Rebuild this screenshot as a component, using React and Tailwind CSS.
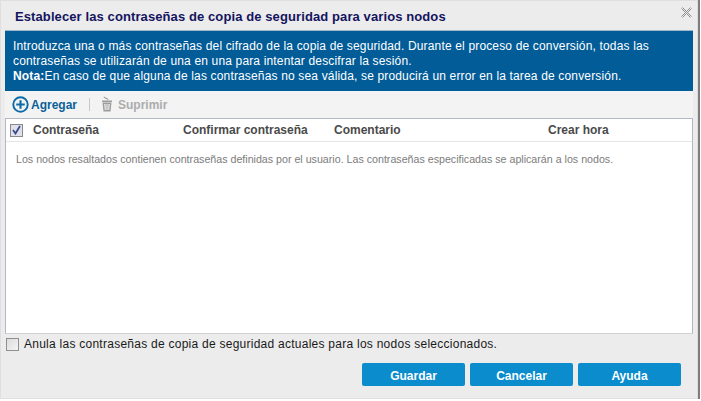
import React from 'react';

const App = () => {
  return (
    <div className="w-[701px] h-[401px] bg-white overflow-hidden font-['Liberation_Sans',Arial,sans-serif]">
      <div className="w-[700px] h-[399px] border-r-2 border-[#7d7d7d]">
        <div className="h-full bg-[#ececec] border border-[#dfdfdf] flex flex-col">
          {/* Title */}
          <div className="h-[29px] flex items-center justify-between pl-[14px] pr-[4px] shrink-0">
            <h1 className="text-[13px] font-bold text-[#14145f] tracking-[0.1px] mt-[2px]">
              Establecer las contraseñas de copia de seguridad para varios nodos
            </h1>
            <svg width="11" height="11" viewBox="0 0 11 11" className="mb-[7px] mr-[1px]" fill="none" stroke="#8f8f8f" strokeWidth="1">
              <path d="M0.5 1.5 L9.5 10.5 M1.5 0.5 L10.5 9.5 M10.5 1.5 L1.5 10.5 M9.5 0.5 L0.5 9.5" />
            </svg>
          </div>

          {/* Info banner */}
          <div className="mx-[4px] h-[61px] bg-[#025c98] border-t border-[#9fb6c9] text-white text-[12px] leading-[15px] pl-[8px] pt-[8px] tracking-[0.16px] shrink-0">
            <p>Introduzca una o más contraseñas del cifrado de la copia de seguridad. Durante el proceso de conversión, todas las</p>
            <p>contraseñas se utilizarán de una en una para intentar descifrar la sesión.</p>
            <p><b>Nota:</b>En caso de que alguna de las contraseñas no sea válida, se producirá un error en la tarea de conversión.</p>
          </div>

          {/* Toolbar */}
          <div className="mx-[4px] h-[27px] bg-[#f3f3f3] flex items-center pl-[7px] shrink-0">
            <svg width="17" height="17" viewBox="0 0 16 16" fill="none" stroke="#0b6aa8" strokeWidth="1.8">
              <circle cx="8" cy="8" r="6.8" />
              <path d="M8 4 V12 M4 8 H12" strokeWidth="2" />
            </svg>
            <span className="ml-[2px] text-[12px] font-bold text-[#0b5f98]">Agregar</span>
            <span className="ml-[12px] w-px h-[13px] bg-[#c8c8c8]" />
            <svg width="12" height="16" viewBox="0 0 12 16" className="ml-[11px] mb-[1px]" fill="#9c9c9c">
              <path d="M3 0.5 L7.5 3 L7 4 L2.5 1.5 Z" />
              <path d="M1 4.5 H11 V6 H1 Z" />
              <path d="M1.5 6.5 H10.5 L9.5 15.5 H2.5 Z M3.2 8 L3.8 14 H4.8 L4.5 8 Z M5.5 8 V14 H6.5 V8 Z M7.5 8 L7.2 14 H8.2 L8.8 8 Z" fillRule="evenodd" />
            </svg>
            <span className="ml-[5px] text-[12px] font-bold text-[#acacac]">Suprimir</span>
          </div>

          {/* Table */}
          <div className="mx-[4px] h-[216px] bg-white border border-[#b4b8c6] border-b-[#d2d2d6] shrink-0 flex flex-col">
            <div className="h-[23px] border-b border-[#e6e6e6] flex items-center text-[12px] font-bold text-[#4a4a4a]">
              <span className="w-[27px] pl-[4px]">
                <span className="w-[13px] h-[13px] border border-[#8a8a8a] bg-[#dfe0ea] flex items-center justify-center">
                  <svg width="9" height="10" viewBox="0 0 9 10" fill="none" stroke="#3b4a8c" strokeWidth="1.8">
                    <path d="M1 5 L3.5 8.5 L8 1" />
                  </svg>
                </span>
              </span>
              <span className="w-[150px]">Contraseña</span>
              <span className="w-[151px]">Confirmar contraseña</span>
              <span className="w-[214px]">Comentario</span>
              <span>Crear hora</span>
            </div>
            <p className="pl-[10px] pt-[11px] text-[10.67px] leading-[13px] text-[#7c7c7c]">
              Los nodos resaltados contienen contraseñas definidas por el usuario. Las contraseñas especificadas se aplicarán a los nodos.
            </p>
          </div>

          {/* Override option */}
          <div className="mx-[5px] mt-[3px] h-[15px] flex items-center gap-[5px] shrink-0">
            <span className="w-[13px] h-[13px] border border-[#8f8f8f] bg-gradient-to-br from-[#dcdcdc] to-[#f4f4f4]" />
            <span className="text-[12px] leading-[14px] mb-[1px] text-[#1a1a1a] tracking-[0.255px]">
              Anula las contraseñas de copia de seguridad actuales para los nodos seleccionados.
            </span>
          </div>

          {/* Footer buttons */}
          <div className="mt-[11px] pl-[361px] flex gap-[5px] shrink-0">
            {['Guardar', 'Cancelar', 'Ayuda'].map((label) => (
              <button key={label} className="w-[103px] h-[23px] pt-[2px] rounded-[2px] bg-[#0a8ccd] text-white text-[12px] font-bold">
                {label}
              </button>
            ))}
          </div>
        </div>
      </div>
    </div>
  );
};

export default App;
